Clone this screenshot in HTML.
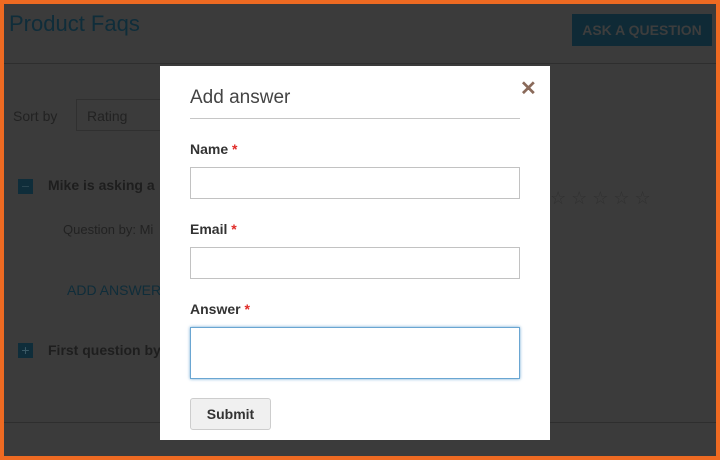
<!DOCTYPE html><html><head><style>
*{margin:0;padding:0;box-sizing:border-box}
body{width:720px;height:460px;background:#ee6a22;font-family:"Liberation Sans",sans-serif;overflow:hidden}
#bg{position:absolute;left:4px;top:4px;width:712px;height:452px;background:#3b3b3b;overflow:hidden}
.a{position:absolute;white-space:nowrap}
.modal{position:absolute;left:160px;top:66px;width:390px;height:374px;background:#fff}
.lbl{position:absolute;left:30px;font-size:14px;font-weight:bold;color:#333}
.lbl span{color:#e02b27}
.inp{position:absolute;left:30px;width:330px;height:32px;border:1px solid #c2c2c2;background:#fff}
</style></head><body>
<div id="bg">
<div class="a" style="left:5px;top:7px;font-size:22px;color:#0f2d3a">Product Faqs</div>
<div class="a" style="left:568px;top:10px;width:140px;height:32px;background:#0f2a36;color:#3d3d3d;font-size:14px;font-weight:bold;line-height:32px;text-align:center">ASK A QUESTION</div>
<div class="a" style="left:0;top:59px;width:712px;height:1px;background:#2e2e2e"></div>
<div class="a" style="left:9px;top:104px;font-size:14px;color:#222">Sort by</div>
<div class="a" style="left:72px;top:95px;width:100px;height:32px;border:1px solid #303030;font-size:14px;color:#222;padding:8px 10px">Rating</div>
<div class="a" style="left:14px;top:175px;width:15px;height:15px;background:#0f2d3a"><div style="position:absolute;left:4px;top:7px;width:7px;height:1px;background:#2a4550"></div></div>
<div class="a" style="left:44px;top:173px;font-size:14px;font-weight:bold;color:#1e1e1e">Mike is asking a</div>
<div class="a" style="left:59px;top:218px;font-size:13px;color:#222">Question by: Mi</div>
<div class="a" style="left:63px;top:278px;font-size:14px;color:#0f2d3a">ADD ANSWER</div>
<div class="a" style="left:14px;top:339px;width:15px;height:15px;background:#0f2d3a;color:#3b5a66;font-size:14px;line-height:14px;text-align:center">+</div>
<div class="a" style="left:44px;top:338px;font-size:14px;font-weight:bold;color:#1e1e1e">First question by</div>
<div class="a" style="left:546px;top:184px;font-size:18px;color:#303030;letter-spacing:5px">☆☆☆☆☆</div>
<div class="a" style="left:0;top:418px;width:712px;height:1px;background:#2e2e2e"></div>
</div>
<div class="modal">
<div class="a" style="left:30px;top:21px;font-size:19px;color:#444">Add answer</div>
<div class="a" style="left:360px;top:10px;font-size:20px;font-weight:bold;color:#8a6a5a">✕</div>
<div class="a" style="left:30px;top:52px;width:330px;height:1px;background:#c6c6c6"></div>
<div class="lbl" style="top:75px">Name <span>*</span></div>
<div class="inp" style="top:101px"></div>
<div class="lbl" style="top:155px">Email <span>*</span></div>
<div class="inp" style="top:181px"></div>
<div class="lbl" style="top:235px">Answer <span>*</span></div>
<div class="inp" style="top:261px;height:52px;border-color:#6aa6d2;box-shadow:0 0 3px #6aa6d2"></div>
<div class="a" style="left:30px;top:332px;width:81px;height:32px;border:1px solid #cdcdcd;border-radius:3px;background:#f0f0f0;font-size:14px;font-weight:bold;color:#333;text-align:center;line-height:30px">Submit</div>
</div>
</body></html>
